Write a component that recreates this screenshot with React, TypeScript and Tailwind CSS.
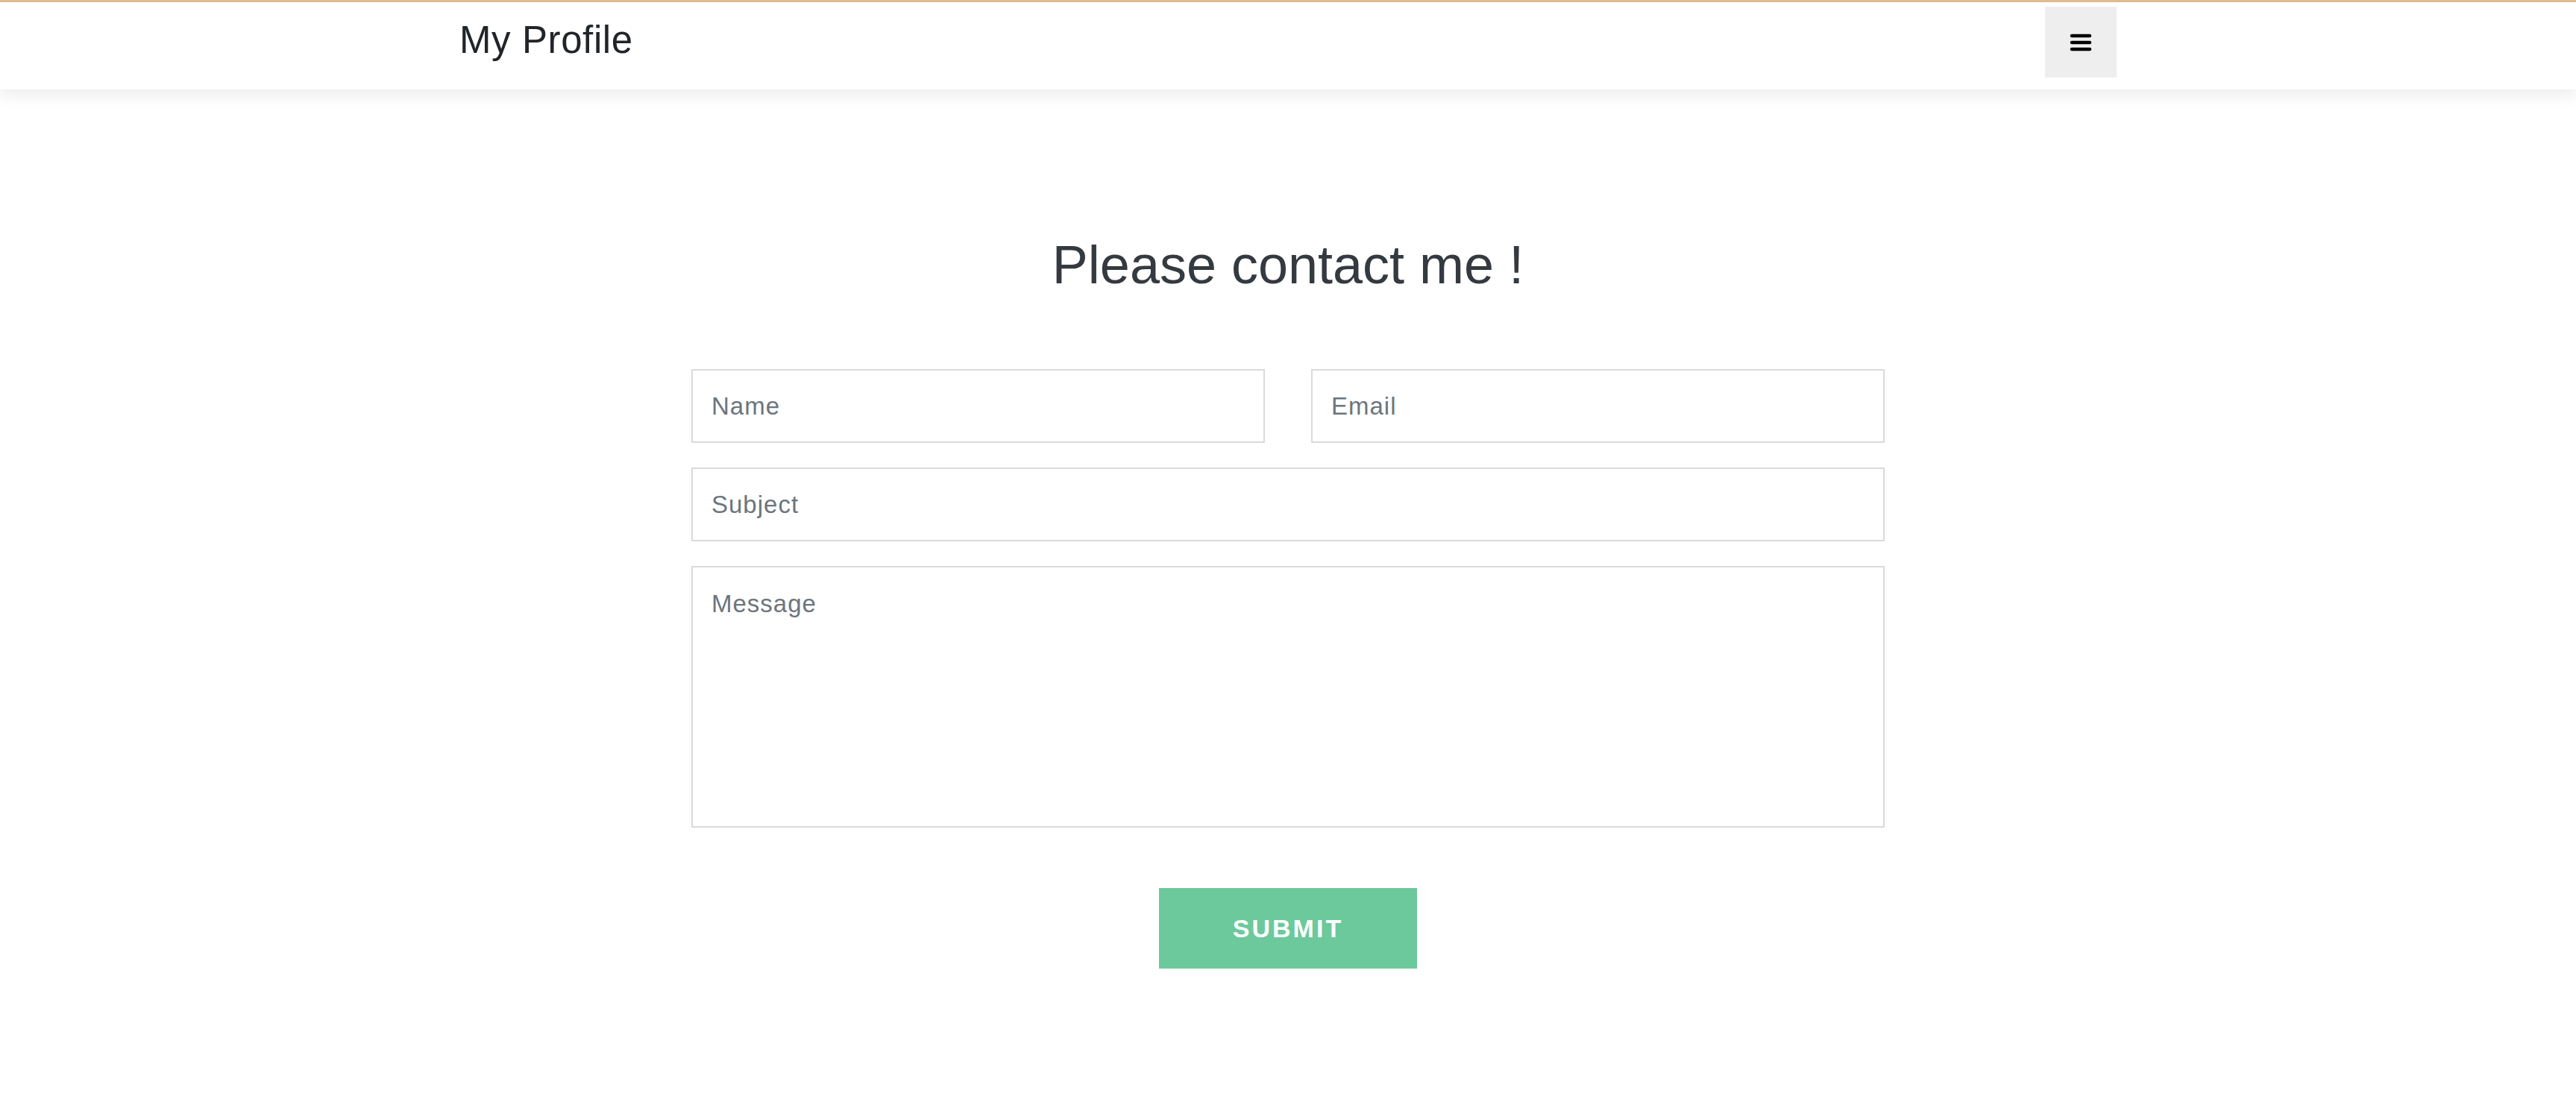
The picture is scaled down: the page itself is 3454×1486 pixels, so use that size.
import React from "react";

export default function App() {
  const font = { fontFamily: '"Liberation Sans", Arial, Helvetica, sans-serif' };
  return (
    <div className="min-h-[1486px] bg-white" style={font}>
      <header className="relative z-10 h-[120px] border-t-[3px] border-[#dfbd8f] bg-white shadow-[0_6px_22px_rgba(0,0,0,0.09)]">
        <div className="mx-auto flex h-full w-[2222px] items-start justify-between">
          <div className="pt-[21px] text-[51px] leading-[60px] tracking-[0.6px] text-[#212529]">My Profile</div>
          <button className="mt-[6px] flex h-[95px] w-[96px] items-center justify-center bg-[#eeeeee]">
            <svg width="30" height="24" viewBox="0 0 30 24">
              <g stroke="#000" strokeWidth="4.5" strokeLinecap="round">
                <line x1="3" y1="3" x2="27" y2="3" />
                <line x1="3" y1="12" x2="27" y2="12" />
                <line x1="3" y1="21" x2="27" y2="21" />
              </g>
            </svg>
          </button>
        </div>
      </header>

      <main className="flex flex-col items-center">
        <h1 className="mt-[192px] text-[72px] leading-[86px] text-[#343a40]">Please contact me !</h1>

        <form className="mt-[97px] flex w-[1600px] flex-col gap-[33px]">
          <div className="grid grid-cols-2 gap-[62px]">
            <input
              placeholder="Name"
              className="h-[99px] border-2 border-[#dadada] px-[25px] text-[33px] tracking-[1px] text-[#495057] placeholder:text-[#6c757d] outline-none"
              style={font}
            />
            <input
              placeholder="Email"
              className="h-[99px] border-2 border-[#dadada] px-[25px] text-[33px] tracking-[1px] text-[#495057] placeholder:text-[#6c757d] outline-none"
              style={font}
            />
          </div>
          <input
            placeholder="Subject"
            className="h-[99px] border-2 border-[#dadada] px-[25px] text-[33px] tracking-[1px] text-[#495057] placeholder:text-[#6c757d] outline-none"
            style={font}
          />
          <textarea
            placeholder="Message"
            className="h-[351px] resize-none border-2 border-[#dadada] px-[25px] pt-[30px] text-[33px] leading-[38px] tracking-[1px] text-[#495057] placeholder:text-[#6c757d] outline-none"
            style={font}
          />
        </form>

        <button
          type="button"
          className="mt-[81px] flex h-[108px] w-[346px] items-center justify-center bg-[#6cc99c] text-[34px] font-bold tracking-[3px] text-white"
          style={font}
        >
          SUBMIT
        </button>
      </main>
    </div>
  );
}
